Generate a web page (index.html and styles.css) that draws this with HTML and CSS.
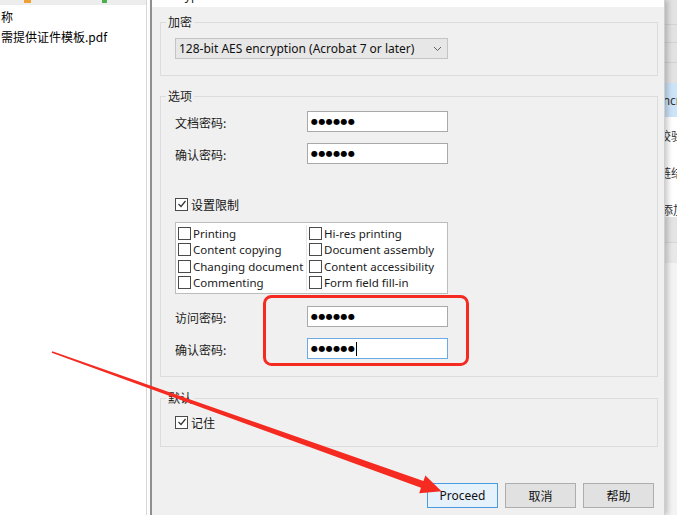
FILE: index.html
```html
<!DOCTYPE html>
<html lang="zh">
<head>
<meta charset="utf-8">
<title>Encrypt</title>
<link rel="stylesheet" href="styles.css">
</head>
<body>
<div class="screen">
  <aside class="files">
    <div class="toolbar"><span class="ico ico-orange"></span><span class="ico ico-green"></span></div>
    <div class="col-head">称</div>
    <div class="file">需提供证件模板.pdf</div>
  </aside>

  <section class="dialog">
    <div class="titlebar"><span class="title">Encrypt</span><span class="close">✕</span></div>
    <div class="body">
      <fieldset class="group group-enc">
        <legend>加密</legend>
        <div class="combo">
          <span class="en">128-bit AES encryption (Acrobat 7 or later)</span>
          <svg class="chev" width="9" height="6" viewBox="0 0 9 6"><path d="M1 1 L4.5 4.5 L8 1" fill="none" stroke="#606060" stroke-width="1"/></svg>
        </div>
      </fieldset>

      <fieldset class="group group-opt">
        <legend>选项</legend>
        <div class="field"><span class="label">文档密码:</span><div class="pw"><span class="dots">●●●●●●</span></div></div>
        <div class="field"><span class="label">确认密码:</span><div class="pw"><span class="dots">●●●●●●</span></div></div>

        <div class="check-row restrict">
          <span class="cb checked"><svg width="10" height="10" viewBox="0 0 10 10"><path d="M1.5 5 L4 7.5 L8.5 2" fill="none" stroke="#333" stroke-width="1.2"/></svg></span>
          <span class="cjk">设置限制</span>
        </div>

        <div class="perms">
          <div class="perm-col left">
            <div class="perm"><span class="cb"></span><span class="en">Printing</span></div>
            <div class="perm"><span class="cb"></span><span class="en">Content copying</span></div>
            <div class="perm"><span class="cb"></span><span class="en">Changing document</span></div>
            <div class="perm"><span class="cb"></span><span class="en">Commenting</span></div>
          </div>
          <div class="perm-col right">
            <div class="perm"><span class="cb"></span><span class="en">Hi-res printing</span></div>
            <div class="perm"><span class="cb"></span><span class="en">Document assembly</span></div>
            <div class="perm"><span class="cb"></span><span class="en">Content accessibility</span></div>
            <div class="perm"><span class="cb"></span><span class="en">Form field fill-in</span></div>
          </div>
        </div>

        <div class="field access"><span class="label">访问密码:</span><div class="pw"><span class="dots">●●●●●●</span></div></div>
        <div class="field"><span class="label">确认密码:</span><div class="pw focused"><span class="dots">●●●●●●</span><span class="caret"></span></div></div>
      </fieldset>

      <fieldset class="group group-def">
        <legend>默认</legend>
        <div class="check-row">
          <span class="cb checked"><svg width="10" height="10" viewBox="0 0 10 10"><path d="M1.5 5 L4 7.5 L8.5 2" fill="none" stroke="#333" stroke-width="1.2"/></svg></span>
          <span class="cjk">记住</span>
        </div>
      </fieldset>

      <div class="buttons">
        <button class="btn primary en">Proceed</button>
        <button class="btn cjk">取消</button>
        <button class="btn cjk">帮助</button>
      </div>
    </div>
  </section>

  <div class="behind">
    <div class="b-top"></div>
    <div class="b-sel"><span class="b-text en cut1">Encr</span></div>
    <div class="b-rows">
      <div class="b-row"><span class="b-text cut2">校验</span></div>
      <div class="b-row"><span class="b-text cut2">链结</span></div>
      <div class="b-row"><span class="b-text cut3">添加</span></div>
    </div>
    <div class="b-band"></div>
    <div class="b-rest"></div>
  </div>

  <svg class="annot" width="677" height="515" viewBox="0 0 677 515">
    <rect x="264.5" y="296.5" width="203" height="68" rx="7" ry="7" fill="none" stroke="#f52a20" stroke-width="3"/>
    <polygon points="52.3,351.3 423.4,480.9 425.4,475.6 441.5,491.2 419.2,493.2 421.0,487.8 51.7,352.7" fill="#f52a20"/>
  </svg>
</div>
</body>
</html>
```

FILE: styles.css
```css
* { box-sizing: border-box; }

body {
  margin: 0;
  width: 677px;
  height: 515px;
  overflow: hidden;
  font-family: "Noto Sans CJK SC", "Noto Sans", sans-serif;
  font-size: 12px;
  color: #111;
}

.en { font-family: "Noto Sans", "Noto Sans CJK SC", sans-serif; font-size: 11.5px; }
.cjk { font-family: "Noto Sans CJK SC", sans-serif; font-size: 12px; }

.screen {
  position: relative;
  display: flex;
  width: 677px;
  height: 515px;
  background: #fff;
  overflow: hidden;
}

/* left file pane */
.files {
  width: 147px;
  flex: none;
  margin-right: 3px;
  border-right: 1px solid #d6d6d6;
}
.toolbar {
  height: 5px;
  background: #ededed;
  display: flex;
  align-items: flex-start;
}
.ico { display: block; width: 7px; height: 3px; }
.ico-orange { background: #f0a030; margin-left: 24px; }
.ico-green { background: #4caf50; margin-left: 71px; width: 5px; }
.col-head { margin-top: 5px; line-height: 14px; padding-left: 1px; color: #000; }
.file { margin-top: 6px; line-height: 14px; padding-left: 1px; color: #000; }

/* dialog */
.dialog {
  position: relative;
  z-index: 1;
  width: 515px;
  flex: none;
  background: #f0f0f0;
  border-left: 2px solid #8f8f8f;
  border-right: 1px solid #cfcfcf;
  box-shadow: 3px 0 5px rgba(0, 0, 0, 0.2);
  display: flex;
  flex-direction: column;
}
.titlebar {
  height: 7px;
  background: #fff;
  overflow: hidden;
  display: flex;
  justify-content: space-between;
  padding: 0 12px 0 8px;
  flex: none;
}
.title { font-family: "Noto Sans", sans-serif; font-size: 12px; line-height: 14px; margin-top: -11px; color: #222; }
.close { font-family: "DejaVu Sans", sans-serif; font-size: 10px; line-height: 12px; margin-top: -10px; color: #888; }

.body { padding: 8px 6px 0 8px; }

.group {
  margin: 0;
  min-width: 0;
  border: 1px solid #dcdcdc;
  padding: 9px 0 16px 14px;
}
.group legend {
  padding: 0 2px;
  margin-left: -9px;
  line-height: 14px;
  font-size: 12px;
  color: #222;
}
.group-opt { margin-top: 13px; padding: 8px 0 17px 14px; }
.group-def { margin-top: 14px; padding: 10px 0 17px 14px; }

.combo {
  width: 273px;
  height: 21px;
  border: 1px solid #c4c4c4;
  background: #e7e7e7;
  display: flex;
  align-items: center;
  justify-content: space-between;
  padding: 0 5px 0 3px;
  color: #111;
}
.combo .en { font-size: 12px; }

.field {
  display: grid;
  grid-template-columns: 132px 141px;
  align-items: center;
  height: 21px;
}
.field + .field { margin-top: 11px; }
.field.access { margin-top: 12px; }
.label { color: #1a1a1a; padding-top: 2px; }
.pw {
  height: 21px;
  border: 1px solid #a9a9a9;
  background: #fff;
  padding-left: 3px;
  display: flex;
  align-items: center;
}
.pw.focused { border-color: #6aaae6; }
.dots {
  font-family: "DejaVu Sans", sans-serif;
  font-size: 8px;
  letter-spacing: 0.4px;
  color: #000;
  line-height: 10px;
}
.caret { width: 1px; height: 14px; background: #000; margin-left: 1px; }

.check-row {
  display: flex;
  align-items: center;
  gap: 3px;
  height: 14px;
}
.restrict { margin-top: 33px; }

.cb {
  width: 13px;
  height: 13px;
  flex: none;
  border: 1px solid #4a4a4a;
  background: #fff;
  display: flex;
  align-items: center;
  justify-content: center;
}

.perms {
  margin-top: 11px;
  width: 273px;
  height: 72px;
  border: 1px solid #bdbdbd;
  background: #fff;
  display: grid;
  grid-template-columns: 131px 1fr;
  padding: 2px 0;
}
.perm-col.left { border-right: 1px solid #e6e6e6; padding-left: 2px; }
.perm-col.right { padding-left: 2px; }
.perm {
  height: 16.5px;
  display: flex;
  align-items: center;
  gap: 2px;
  color: #1a1a1a;
  white-space: nowrap;
}

.buttons {
  margin-top: 36px;
  display: flex;
  justify-content: flex-end;
  gap: 7px;
  padding-right: 4px;
}
.btn {
  width: 71px;
  height: 25px;
  border: 1px solid #adadad;
  background: #e1e1e1;
  color: #111;
  display: flex;
  align-items: center;
  justify-content: center;
  padding: 0;
  margin: 0;
}
.btn.primary { border-color: #4b9be0; background: #e5f1fb; font-size: 12px; }

/* window behind, right edge */
.behind {
  flex: 1;
  display: flex;
  flex-direction: column;
  overflow: hidden;
  background: #f2f2f2;
}
.b-top {
  height: 83px;
  background: linear-gradient(#e2e2e2 0 24px, #d2d2d2 24px 25px, #e2e2e2 25px 42px, #d2d2d2 42px 43px, #e2e2e2 43px 62px, #d2d2d2 62px 63px, #e2e2e2 63px);
}
.b-sel { height: 34px; background: #cce3f8; display: flex; align-items: center; }
.b-rows { height: 100px; background: #fff; padding-top: 11px; }
.b-row { height: 14px; display: flex; align-items: center; }
.b-row + .b-row { margin-top: 23px; }
.b-text { white-space: nowrap; color: #333; font-size: 12px; }
.cut1 { margin-left: -9px; color: #333; }
.cut2 { margin-left: -6px; }
.cut3 { margin-left: -4px; }
.b-band { height: 46px; background: linear-gradient(#e4e4e4 0 25px, #d6d6d6 25px 26px, #e8e8e8 26px); }
.b-rest { flex: 1; background: #f3f3f3; }

.annot {
  position: absolute;
  left: 0;
  top: 0;
  pointer-events: none;
  z-index: 5;
}
```
